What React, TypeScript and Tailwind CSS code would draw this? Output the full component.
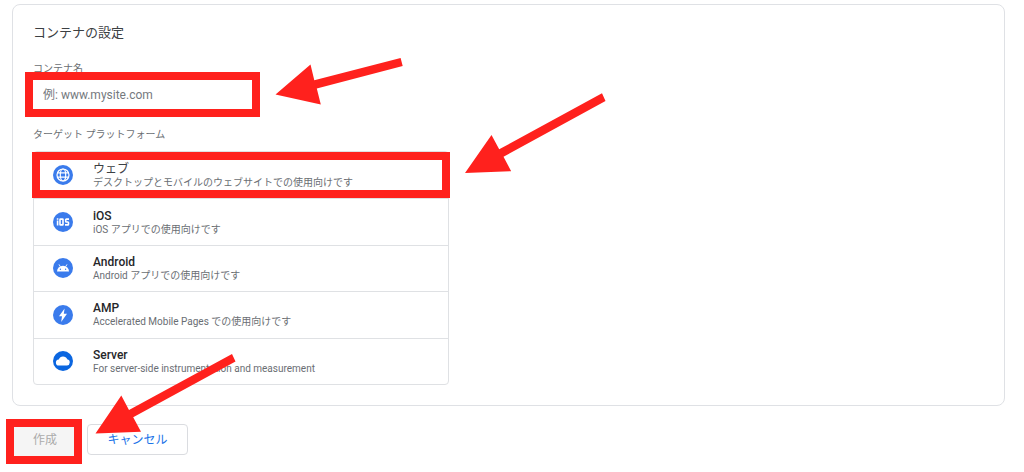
import type { ReactNode } from 'react';

interface Platform {
  id: string;
  name: string;
  description: string;
  icon: ReactNode;
  highlighted?: boolean;
}

function WebIcon() {
  return (
    <svg viewBox="0 0 20 20" className="size-5 shrink-0" aria-hidden="true">
      <circle cx="10" cy="10" r="10" fill="#3a7bec" />
      <g fill="none" stroke="#fff" strokeWidth="1.2">
        <circle cx="10" cy="10" r="6" />
        <ellipse cx="10" cy="10" rx="2.7" ry="6" />
        <path d="M4.5 7.9h11M4.5 12.1h11" />
      </g>
    </svg>
  );
}

function IosIcon() {
  return (
    <svg viewBox="0 0 20 20" className="size-5 shrink-0" aria-hidden="true">
      <circle cx="10" cy="10" r="10" fill="#3a7bec" />
      <g fill="none" stroke="#fff" strokeWidth="1.6">
        <path d="M4.6 8.6v5M4.6 6.3v1.4" />
        <rect x="7" y="7.1" width="3" height="5.8" rx="0.5" />
        <path d="M16 7.1h-2.6a.7.7 0 0 0-.7.7v1.5a.7.7 0 0 0 .7.7h1.4a.7.7 0 0 1 .7.7v1.5a.7.7 0 0 1-.7.7h-2.8" />
      </g>
    </svg>
  );
}

function AndroidIcon() {
  return (
    <svg viewBox="0 0 20 20" className="size-5 shrink-0" aria-hidden="true">
      <circle cx="10" cy="10" r="10" fill="#3a7bec" />
      <path d="M4 13.4a6 5.6 0 0 1 12 0z" fill="#fff" />
      <path d="M6 6.4l1.4 2.4M14 6.4l-1.4 2.4" stroke="#fff" strokeWidth="0.9" />
      <circle cx="7.4" cy="11.3" r="0.7" fill="#3a7bec" />
      <circle cx="12.6" cy="11.3" r="0.7" fill="#3a7bec" />
    </svg>
  );
}

function AmpIcon() {
  return (
    <svg viewBox="0 0 20 20" className="size-5 shrink-0" aria-hidden="true">
      <circle cx="10" cy="10" r="10" fill="#3a7bec" />
      <path d="M11.6 3.4L6 11.3h3l-.8 5.6 5.8-8.2h-3.2z" fill="#fff" />
    </svg>
  );
}

function ServerIcon() {
  return (
    <svg viewBox="0 0 20 20" className="size-5 shrink-0" aria-hidden="true">
      <circle cx="10" cy="10" r="10" fill="#0b66e0" />
      <path
        d="M6.2 14.6a3.1 3.1 0 0 1-.4-6.2 4.5 4.5 0 0 1 8.4-.1 3.2 3.2 0 0 1-.2 6.3z"
        fill="#fff"
      />
    </svg>
  );
}

const platforms: Platform[] = [
  {
    id: 'web',
    name: 'ウェブ',
    description: 'デスクトップとモバイルのウェブサイトでの使用向けです',
    icon: <WebIcon />,
    highlighted: true,
  },
  { id: 'ios', name: 'iOS', description: 'iOS アプリでの使用向けです', icon: <IosIcon /> },
  { id: 'android', name: 'Android', description: 'Android アプリでの使用向けです', icon: <AndroidIcon /> },
  { id: 'amp', name: 'AMP', description: 'Accelerated Mobile Pages での使用向けです', icon: <AmpIcon /> },
  {
    id: 'server',
    name: 'Server',
    description: 'For server-side instrumentation and measurement',
    icon: <ServerIcon />,
  },
];

/** Thick red frame laid over its positioned parent. */
function Frame({ className }: { className: string }) {
  return <span aria-hidden="true" className={`pointer-events-none absolute border-8 border-[#ff211d] ${className}`} />;
}

/** Red arrows that point at the three steps. */
function Arrows() {
  return (
    <svg
      width="640"
      height="472"
      viewBox="0 0 640 472"
      fill="#ff211d"
      aria-hidden="true"
      className="pointer-events-none absolute top-0 left-0 max-w-none"
    >
      <path d="M275.5 94.5L310.5 64.5L314.3 80.3L400.6 58L402.7 66L316.8 88.4L320.8 104.5Z" />
      <path d="M465 173L491.5 135L499.2 149.3L602 93.2L605.5 101L503.5 156.8L511.2 171.2Z" />
      <path d="M95.5 433.5L121.3 395.5L129 410L232 354L235.5 361.5L133.2 417.3L141 431.8Z" />
    </svg>
  );
}

function PlatformRow({ platform }: { platform: Platform }) {
  return (
    <li className="relative flex border-t border-[#dfe1e4] first:border-t-0">
      <button type="button" className="flex flex-1 items-center gap-5 pl-[19px] text-left">
        {platform.icon}
        <span className="flex flex-col">
          <span
            className={`text-[12px] leading-[14px] ${platform.highlighted ? 'font-normal text-[#3c4043]' : 'font-medium text-[#252629]'}`}
          >
            {platform.name}
          </span>
          <span className="text-[10px] leading-[13px] text-[#6a6e73]">{platform.description}</span>
        </span>
      </button>
      {platform.highlighted && <Frame className="-inset-x-0.5 inset-y-0" />}
    </li>
  );
}

export default function App() {
  return (
    <main className="relative min-h-screen bg-white pt-1 pr-[19px] pb-2 pl-3 font-['Roboto','Noto_Sans_CJK_JP',sans-serif]">
      <section className="rounded-lg border border-[#dfe1e5] px-5 pt-[18px] pb-5">
        <h1 className="text-[13px] leading-5 text-[#3c4043]">コンテナの設定</h1>

        <label htmlFor="container-name" className="mt-[18px] block text-[10px] leading-4 text-[#6a6e73]">
          コンテナ名
        </label>
        <div className="relative mt-[3px] h-[29px] w-[219px]">
          <input
            id="container-name"
            type="text"
            placeholder="例: www.mysite.com"
            className="size-full bg-white px-2.5 text-[12px] text-[#3c4043] outline-none placeholder:text-[#75797e]"
          />
          <Frame className="-inset-2" />
        </div>

        <h2 className="mt-[18px] text-[10px] leading-4 text-[#6a6e73]">ターゲット プラットフォーム</h2>
        <ul className="mt-2 grid min-h-[234px] max-w-[416px] auto-rows-fr rounded border border-[#dfe1e4]">
          {platforms.map((platform) => (
            <PlatformRow key={platform.id} platform={platform} />
          ))}
        </ul>
      </section>

      <div className="mt-[18px] flex items-start gap-[9px]">
        <div className="relative">
          <button
            type="button"
            disabled
            className="block h-8 w-[66px] rounded bg-[#f5f5f5] text-[12px] text-[#ababab]"
          >
            作成
          </button>
          <Frame className="-top-[5px] -right-1 -bottom-2 -left-1.5" />
        </div>
        <button
          type="button"
          className="h-[31px] w-[101px] rounded border border-[#dadce0] bg-white text-[12px] text-[#1a73e8]"
        >
          キャンセル
        </button>
      </div>

      <Arrows />
    </main>
  );
}
